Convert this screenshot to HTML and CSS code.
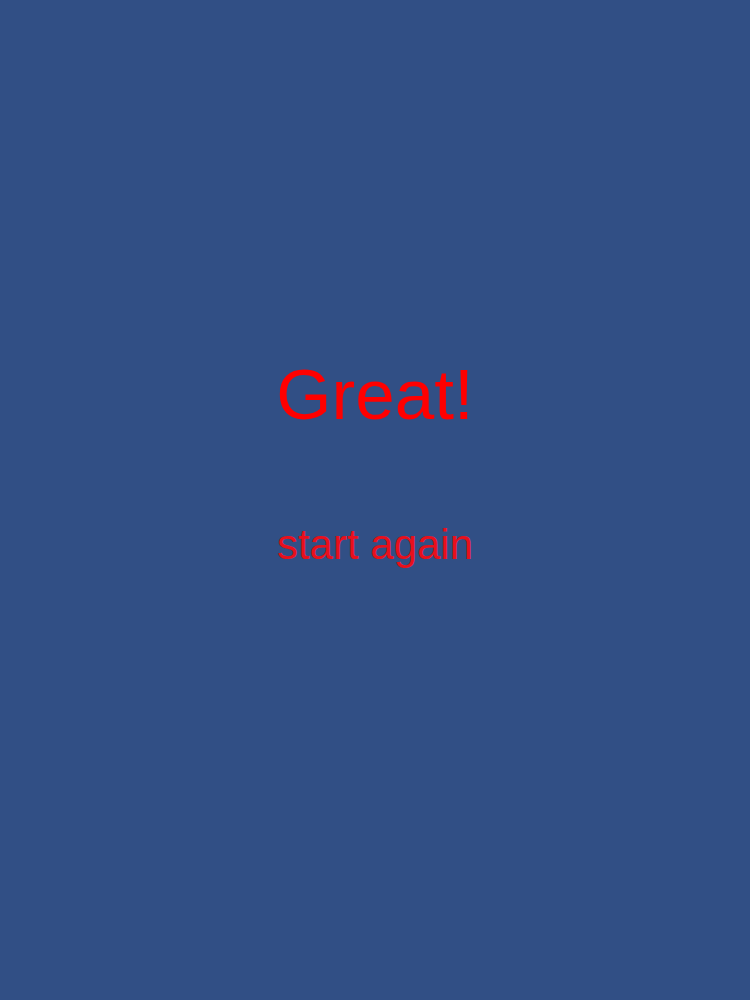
FILE: index.html
```html
<!DOCTYPE html>
<html>
<head>
<meta charset="utf-8">
<link rel="stylesheet" href="styles.css">
</head>
<body>
<main class="screen">
  <h1 class="title">Great!</h1>
  <a class="restart" href="#">start again</a>
</main>
</body>
</html>
```
FILE: styles.css
```css
html, body {
  margin: 0;
  padding: 0;
  background: #314f85;
}
.screen {
  min-height: 1000px;
  box-sizing: border-box;
  padding-top: 359px;
  display: flex;
  flex-direction: column;
  align-items: center;
  gap: 94px;
  font-family: "Liberation Sans", Arial, sans-serif;
}
.title {
  margin: 0;
  font-size: 71px;
  line-height: 71px;
  font-weight: normal;
  color: #ff0000;
}
.restart {
  font-size: 42px;
  line-height: 42px;
  color: #e8101c;
  text-decoration: none;
}
```
